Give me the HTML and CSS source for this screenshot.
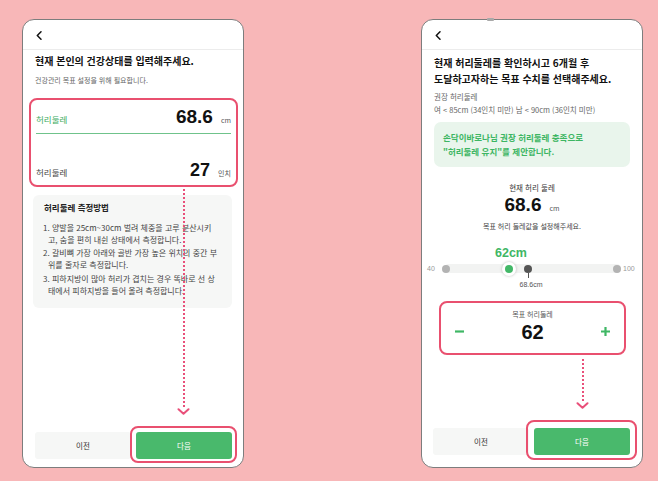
FILE: index.html
```html
<!DOCTYPE html>
<html lang="ko">
<head>
<meta charset="utf-8">
<title>허리둘레 입력</title>
<link rel="stylesheet" href="styles.css">
</head>
<body>
<div class="stage">
  <section class="phone phone-a">
    <header class="topbar">
      <svg class="back" width="6" height="9" viewBox="0 0 6 9"><path d="M5 0.8 L1.3 4.5 L5 8.2" fill="none" stroke="#111" stroke-width="1.5" stroke-linecap="round" stroke-linejoin="round"/></svg>
    </header>
    <div class="content">
      <h1 class="title title-a">현재 본인의 건강상태를 입력해주세요.</h1>
      <p class="sub">건강관리 목표 설정을 위해 필요합니다.</p>
      <div class="input-box">
        <div class="row row-active">
          <span class="row-label green">허리둘레</span>
          <span class="row-val"><b class="num big">68.6</b><span class="unit">cm</span></span>
        </div>
        <div class="row row-second">
          <span class="row-label">허리둘레</span>
          <span class="row-val"><b class="num mid">27</b><span class="unit">인치</span></span>
        </div>
      </div>
      <div class="howto">
        <h2>허리둘레 측정방법</h2>
        <ol>
          <li>1. 양발을 25cm~30cm 벌려 체중을 고루 분산시키<br>고, 숨을 편히 내쉰 상태에서 측정합니다.</li>
          <li>2. 갈비뼈 가장 아래와 골반 가장 높은 위치의 중간 부위를 줄자로 측정합니다.</li>
          <li>3. 피하지방이 많아 허리가 겹치는 경우 똑바로 선 상태에서 피하지방을 들어 올려 측정합니다.</li>
        </ol>
      </div>
    </div>
    <footer class="actions actions-a">
      <button class="btn prev">이전</button>
      <button class="btn next next-a">다음</button>
    </footer>
    <div class="arrow arrow-a">
      <span class="dots"></span>
      <svg class="head" width="13" height="7" viewBox="0 0 13 7"><path d="M1.5 1.2 L6.5 5.8 L11.5 1.2" fill="none" stroke="#e9507a" stroke-width="2" stroke-linecap="round" stroke-linejoin="round"/></svg>
    </div>
  </section>

  <section class="phone phone-b">
    <span class="notch"></span>
    <header class="topbar">
      <svg class="back" width="6" height="9" viewBox="0 0 6 9"><path d="M5 0.8 L1.3 4.5 L5 8.2" fill="none" stroke="#111" stroke-width="1.5" stroke-linecap="round" stroke-linejoin="round"/></svg>
    </header>
    <div class="content">
      <h1 class="title title-b">현재 허리둘레를 확인하시고 6개월 후 도달하고자하는 목표 수치를 선택해주세요.</h1>
      <div class="rec">
        <p>권장 허리둘레</p>
        <p>여 &lt; 85cm (34인치 미만) 남 &lt; 90cm (36인치 미만)</p>
      </div>
      <div class="notice">손닥이바로나님 권장 허리둘레 충족으로 "허리둘레 유지"를 제안합니다.</div>
      <div class="current">
        <p class="cur-label">현재 허리 둘레</p>
        <p class="cur-val"><b class="num big">68.6</b><span class="unit">cm</span></p>
        <p class="cur-hint">목표 허리 둘레값을 설정해주세요.</p>
      </div>
      <div class="slider">
        <span class="sl-pick">62cm</span>
        <span class="sl-min">40</span>
        <span class="sl-track"></span>
        <span class="sl-dot sl-end-l"></span>
        <span class="sl-dot sl-end-r"></span>
        <span class="sl-thumb"><span></span></span>
        <span class="sl-cur"></span>
        <span class="sl-tick"></span>
        <span class="sl-cur-label">68.6cm</span>
        <span class="sl-max">100</span>
      </div>
      <div class="target-box">
        <p class="tg-label">목표 허리둘레</p>
        <div class="stepper">
          <svg class="step" width="11" height="11" viewBox="0 0 11 11"><path d="M1 5.5 H10" stroke="#3fb765" stroke-width="2.2"/></svg>
          <b class="num tg-val">62</b>
          <svg class="step" width="11" height="11" viewBox="0 0 11 11"><path d="M1 5.5 H10 M5.5 1 V10" stroke="#3fb765" stroke-width="2.2"/></svg>
        </div>
      </div>
    </div>
    <footer class="actions actions-b">
      <button class="btn prev">이전</button>
      <button class="btn next next-b">다음</button>
    </footer>
    <div class="arrow arrow-b">
      <span class="dots"></span>
      <svg class="head" width="13" height="7" viewBox="0 0 13 7"><path d="M1.5 1.2 L6.5 5.8 L11.5 1.2" fill="none" stroke="#e9507a" stroke-width="2" stroke-linecap="round" stroke-linejoin="round"/></svg>
    </div>
  </section>
</div>
</body>
</html>
```

FILE: styles.css
```css
* { box-sizing: border-box; margin: 0; padding: 0; }
html, body { width: 658px; height: 481px; overflow: hidden; }
body {
  background: #f8b7b8;
  font-family: "Noto Sans CJK KR", "Noto Sans", sans-serif;
  color: #222;
}
.stage { display: flex; gap: 177px; padding: 19px 0 0 22px; }

.phone {
  position: relative;
  width: 222px;
  height: 449px;
  background: #fff;
  border: 1px solid #7d7d7d;
  border-radius: 12px;
  display: flex;
  flex-direction: column;
}
.notch {
  position: absolute;
  top: -2px;
  left: 65px;
  width: 7px;
  height: 3px;
  background: #a9a9a9;
  border-radius: 1px;
}
.topbar {
  height: 30px;
  flex: none;
  border-bottom: 1px solid #ececec;
  display: flex;
  align-items: center;
  padding: 1px 0 0 13px;
}
.back { display: block; }
.content { flex: 1; padding: 0 12px; }

.title { font-weight: 700; font-size: 10px; color: #111; word-break: keep-all; }
.title-a { line-height: 14px; padding-top: 4px; }
.title-b { line-height: 16px; padding-top: 5px; }
.sub { font-size: 7px; line-height: 10px; color: #666; margin-top: 7px; }

.num { font-family: "Liberation Sans", Arial, sans-serif; font-weight: 700; color: #111; }
.big { font-size: 19px; }
.mid { font-size: 18px; }
.unit { font-size: 7px; color: #555; margin-left: 8px; }

.input-box {
  margin: 13px -7px 0 -6px;
  border: 2px solid #e9506f;
  border-radius: 8px;
  padding: 0 5px 2px;
}
.row { display: flex; justify-content: space-between; align-items: center; line-height: 20px; }
.row-label { font-size: 8.5px; color: #444; }
.row-label.green { color: #3aab5e; }
.row-val { display: flex; align-items: baseline; }
.row-active { padding: 7px 0 3px; border-bottom: 1.5px solid #6fc38b; }
.row-second { padding-top: 26px; }

.howto {
  margin: 8px -1px 0 -2px;
  background: #f6f7f6;
  border-radius: 6px;
  padding: 6px 10px 11px;
}
.howto h2 { font-size: 8.5px; line-height: 12px; font-weight: 700; color: #222; padding-left: 1px; }
.howto ol { list-style: none; margin-top: 8.5px; }
.howto li {
  font-size: 8px;
  line-height: 12px;
  color: #444;
  padding-left: 5px;
  text-indent: -5px;
}
.howto li + li { margin-top: 1.5px; }

.actions { flex: none; display: flex; gap: 5px; }
.actions-a { padding: 0 11px 8px 12px; }
.actions-b { padding: 0 12px 12px 11px; }
.btn {
  flex: 1;
  height: 27px;
  border: 0;
  border-radius: 3px;
  font-family: "Noto Sans CJK KR", sans-serif;
  font-size: 7.5px;
  position: relative;
}
.prev { background: #f6f7f6; color: #333; }
.next { background: #49b96c; color: #fff; }
.next::after {
  content: "";
  position: absolute;
  border: 2px solid #e9506f;
  border-radius: 8px;
}
.next-a::after { inset: -6px -5px -4px -6px; }
.next-b::after { inset: -8px -7px -5px -8px; }

.arrow {
  position: absolute;
  display: flex;
  flex-direction: column;
  align-items: center;
  width: 13px;
}
.arrow .dots {
  width: 2px;
  flex: 1;
  background: repeating-linear-gradient(to bottom, #e9507a 0 2px, transparent 2px 4px);
}
.arrow .head { display: block; }
.arrow-a { left: 154px; top: 165px; height: 230px; }
.arrow-b { left: 154px; top: 339px; height: 50px; }

.rec { margin-top: 2.5px; font-size: 7.5px; line-height: 13px; color: #666; }
.notice {
  margin-top: 6px;
  background: #e9f5ec;
  border-radius: 7px;
  padding: 8px 9px 9px;
  font-size: 8.5px;
  line-height: 14px;
  font-weight: 700;
  color: #3db663;
  word-break: keep-all;
}
.current { text-align: center; margin-top: 15px; }
.cur-label { font-size: 7.5px; line-height: 12px; color: #333; }
.cur-val { line-height: 22px; display: flex; justify-content: center; align-items: baseline; }
.cur-hint { font-size: 7px; line-height: 12px; color: #444; margin-top: 1px; }

.slider { position: relative; height: 50px; margin: 13px -12px 0; }
.slider > span { position: absolute; }
.sl-pick {
  left: 89px; top: 0; transform: translateX(-50%);
  font-family: "Liberation Sans", Arial, sans-serif; font-weight: 700;
  font-size: 12.5px; line-height: 16px; color: #3fb765;
}
.sl-min, .sl-max { top: 18px; font-family: "Liberation Sans", Arial, sans-serif; font-size: 7px; line-height: 12px; color: #999; }
.sl-min { left: 5px; }
.sl-max { left: 201px; }
.sl-track { left: 22px; width: 177px; top: 19.5px; height: 9px; border-radius: 5px; background: #f2f3f2; }
.sl-dot { width: 8px; height: 8px; top: 20px; border-radius: 50%; background: #b3b3b3; }
.sl-end-l { left: 20px; }
.sl-end-r { left: 191px; }
.sl-thumb {
  left: 80px; top: 17px; width: 14px; height: 14px; border-radius: 50%;
  background: #fff; box-shadow: 0 0 3px rgba(0,0,0,0.25);
  display: flex; align-items: center; justify-content: center;
}
.sl-thumb span { width: 8px; height: 8px; border-radius: 50%; background: #43b868; }
.sl-cur { left: 102px; top: 20px; width: 8px; height: 8px; border-radius: 50%; background: #555; }
.sl-tick { left: 105.5px; top: 28px; width: 1px; height: 5px; background: #555; }
.sl-cur-label { left: 109px; top: 34px; transform: translateX(-50%); font-family: "Liberation Sans", Arial, sans-serif; font-size: 7px; line-height: 12px; color: #555; }

.target-box {
  margin: 6px 4px 0 5px;
  height: 54px;
  border: 2px solid #e9506f;
  border-radius: 8px;
  padding: 6px 13px 0;
}
.tg-label { text-align: center; font-size: 7px; line-height: 11px; color: #555; }
.stepper { display: flex; justify-content: space-between; align-items: center; height: 24px; }
.step { display: block; }
.tg-val { font-size: 20px; line-height: 24px; }
```
